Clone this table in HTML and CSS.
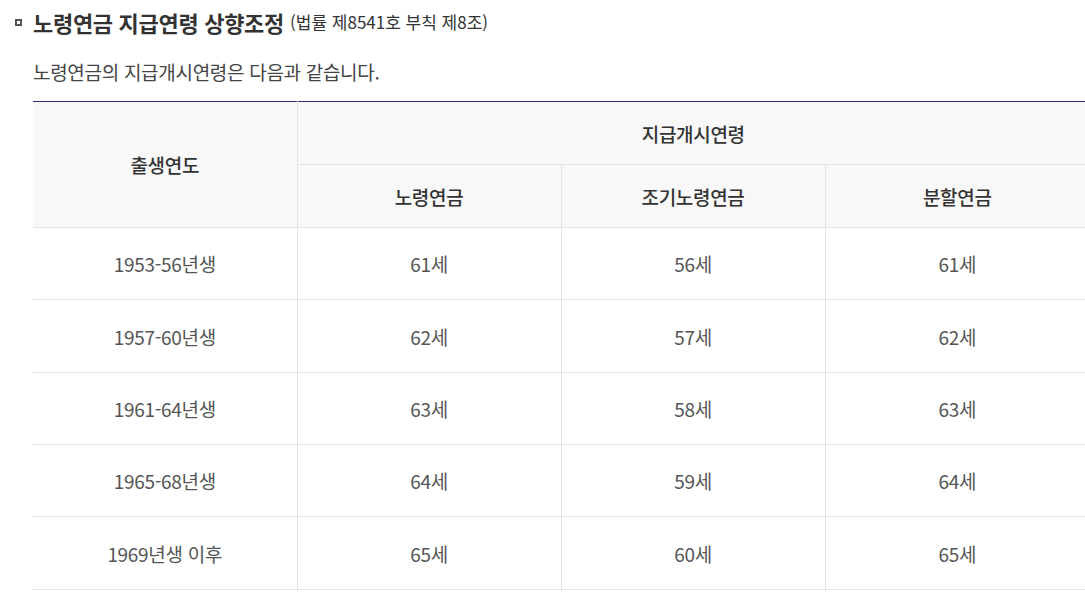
FILE: index.html
```html
<!DOCTYPE html>
<html lang="ko">
<head>
<meta charset="utf-8">
<title>노령연금 지급연령 상향조정</title>
<link rel="stylesheet" href="styles.css">
</head>
<body>
<div class="page">
  <h2 class="title"><span class="bullet"></span><span class="title-main">노령연금 지급연령 상향조정</span><span class="title-sub">(법률 제8541호 부칙 제8조)</span></h2>
  <p class="desc">노령연금의 지급개시연령은 다음과 같습니다.</p>
  <table class="tbl">
    <thead>
      <tr>
        <th rowspan="2" class="c-first">출생연도</th>
        <th colspan="3">지급개시연령</th>
      </tr>
      <tr>
        <th>노령연금</th>
        <th>조기노령연금</th>
        <th>분할연금</th>
      </tr>
    </thead>
    <tbody>
      <tr><td class="c-first">1953-56년생</td><td>61세</td><td>56세</td><td>61세</td></tr>
      <tr><td class="c-first">1957-60년생</td><td>62세</td><td>57세</td><td>62세</td></tr>
      <tr><td class="c-first">1961-64년생</td><td>63세</td><td>58세</td><td>63세</td></tr>
      <tr><td class="c-first">1965-68년생</td><td>64세</td><td>59세</td><td>64세</td></tr>
      <tr><td class="c-first">1969년생 이후</td><td>65세</td><td>60세</td><td>65세</td></tr>
    </tbody>
  </table>
</div>
</body>
</html>
```

FILE: styles.css
```css
html, body {
  margin: 0;
  padding: 0;
  background: #fff;
  overflow: hidden;
}
body {
  font-family: "Noto Sans CJK KR", "Noto Sans", sans-serif;
  color: #444;
}
.page {
  padding: 7px 0 0 33px;
}
.title {
  display: flex;
  align-items: center;
  margin: 0 0 0 -18px;
  height: 30px;
  line-height: 30px;
  font-weight: 700;
  font-size: 22px;
  color: #333;
}
.bullet {
  width: 3px;
  height: 3px;
  border: 2px solid #555;
  margin-right: 11px;
  flex: none;
}
.title-main {
  letter-spacing: -0.3px;
}
.title-sub {
  font-size: 17px;
  font-weight: 400;
  margin-left: 6px;
  letter-spacing: 0;
  color: #333;
}
.desc {
  margin: 21px 0 0 0;
  line-height: 28px;
  font-size: 19px;
  letter-spacing: -0.3px;
  color: #444;
}
.tbl {
  margin-top: 15px;
  width: 1056px;
  border-collapse: collapse;
  table-layout: fixed;
  border-top: 1px solid #2c2a6a;
  font-size: 19px;
  letter-spacing: -0.3px;
}
.tbl th, .tbl td {
  text-align: center;
  border-bottom: 1px solid #e3e3e3;
  border-left: 1px solid #e3e3e3;
  padding: 0;
}
.tbl th.c-first, .tbl td.c-first {
  border-left: none;
}
.tbl th {
  background: #f8f8f8;
  height: 62px;
  font-weight: 500;
  color: #333;
}
.tbl td {
  height: 71.35px;
  font-weight: 400;
  color: #555;
}
```
